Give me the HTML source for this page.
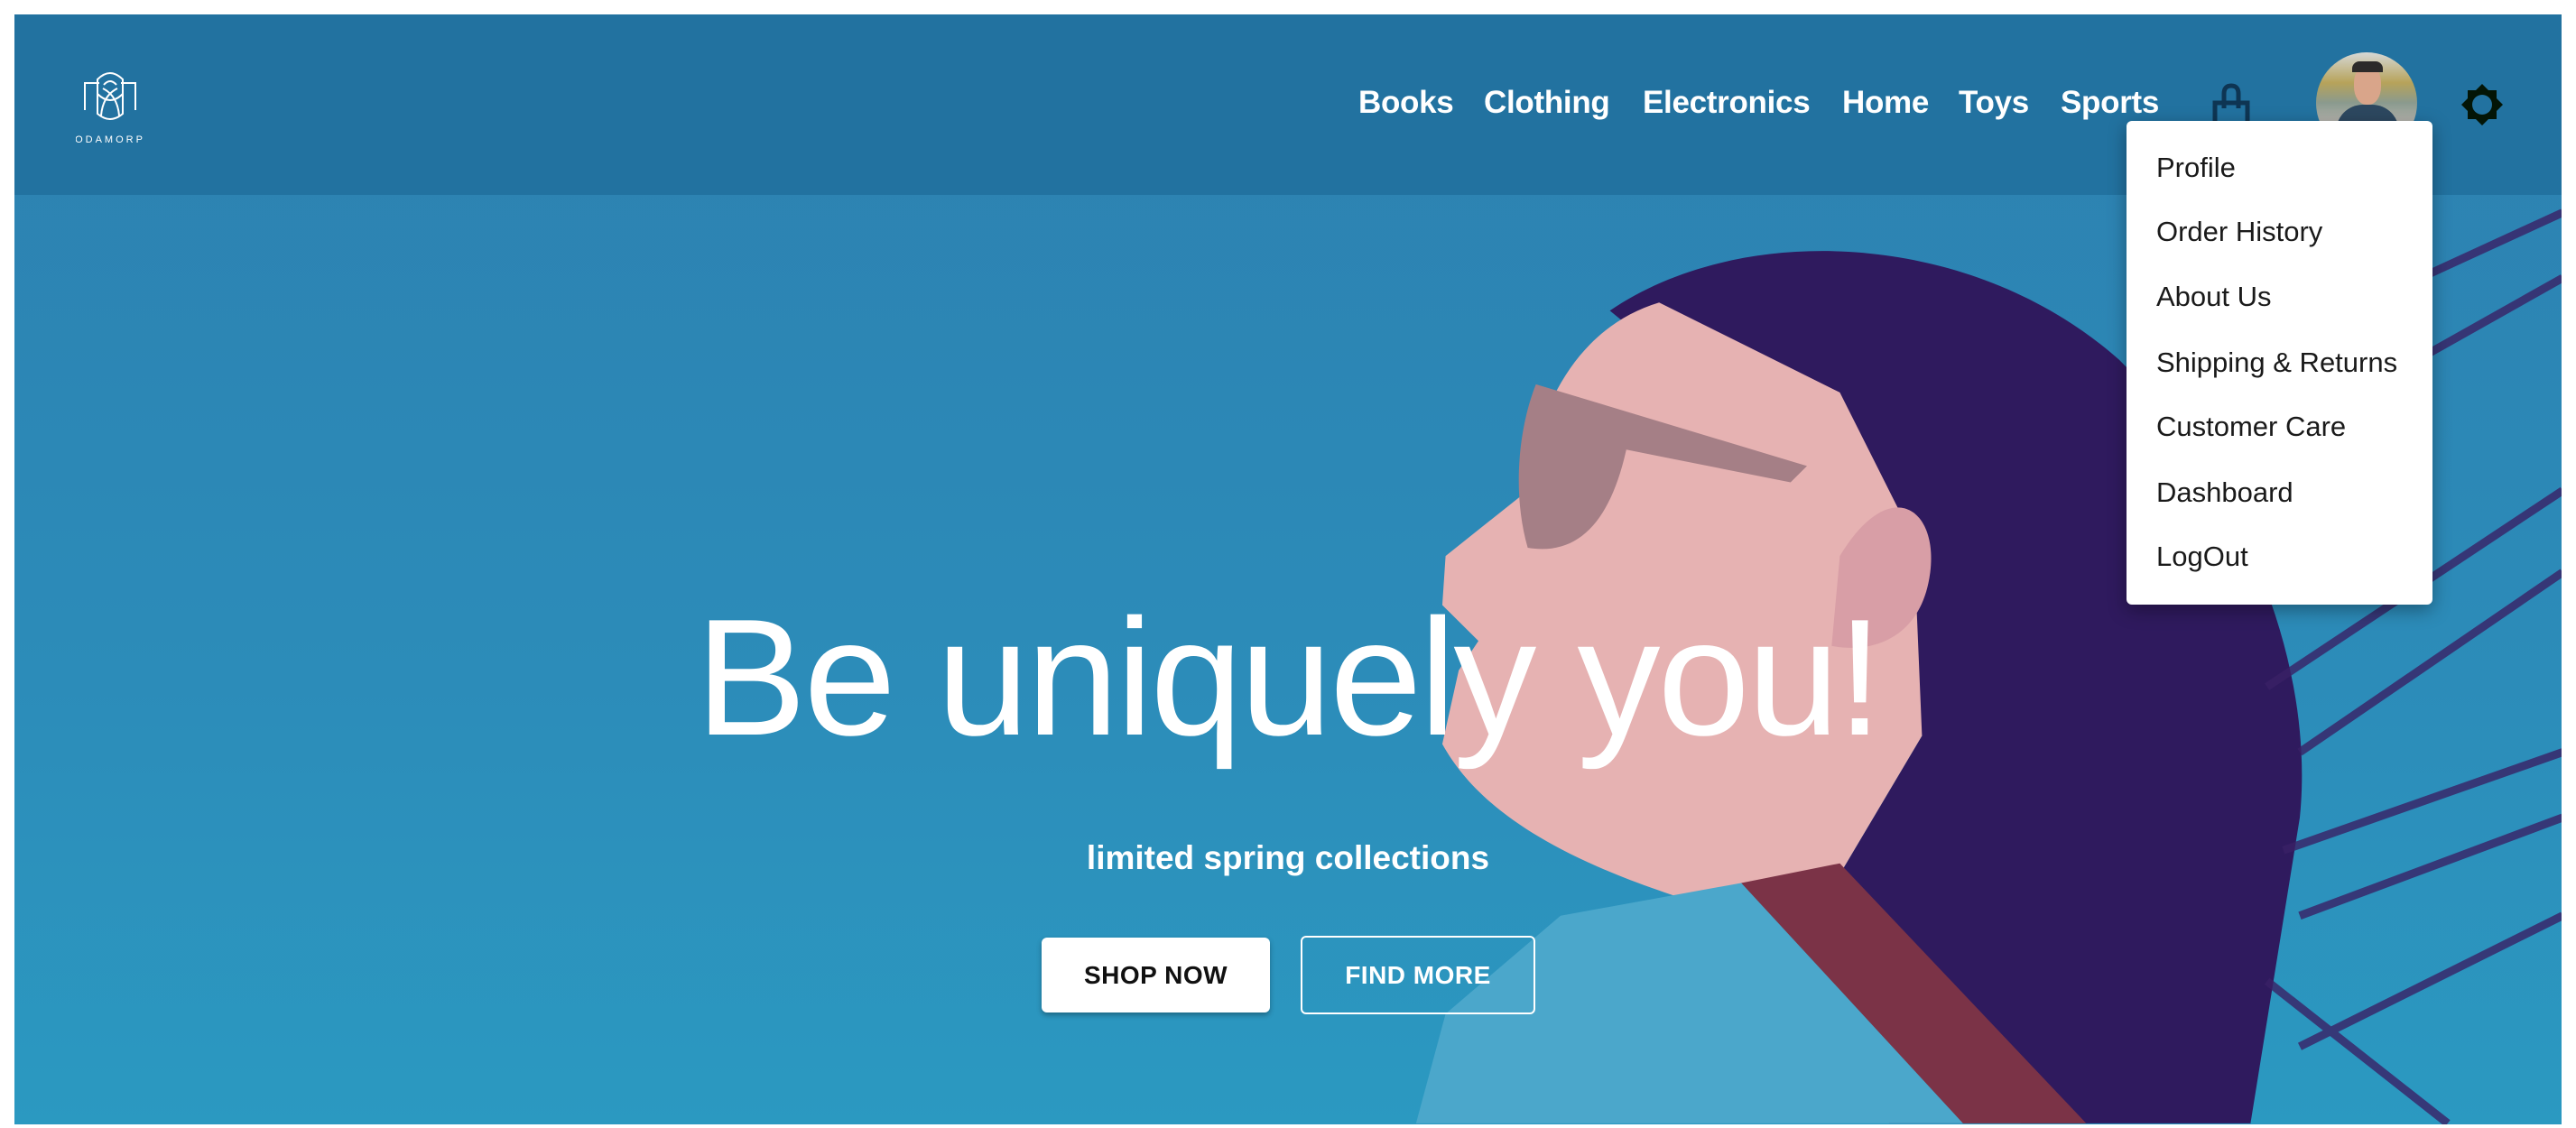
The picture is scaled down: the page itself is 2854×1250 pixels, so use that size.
<!DOCTYPE html>
<html><head><meta charset="utf-8"><style>
*{margin:0;padding:0;box-sizing:border-box}
body{width:2854px;height:1250px;background:#fff;position:relative;overflow:hidden;font-family:"Liberation Sans",sans-serif}
#hero{position:absolute;left:16px;top:16px;width:2822px;height:1230px;background:linear-gradient(180deg,#2d80b0 0%,#2c8cb9 60%,#2b99c1 100%);overflow:hidden}
#hdr{position:absolute;left:16px;top:16px;width:2822px;height:200px;background:#2272a0}
.nav{position:absolute;top:114px;transform:translateY(-50%);color:#fff;font-weight:bold;font-size:35px;letter-spacing:-0.3px}
#dd{position:absolute;left:2356px;top:134px;width:339px;height:536px;background:#fff;border-radius:6px;box-shadow:0 6px 20px rgba(0,0,0,.35)}
#dd div{position:absolute;left:33px;font-size:31px;color:#1a1a1a;transform:translateY(-50%)}
h1{position:absolute;left:0;width:2854px;text-align:center;top:645px;color:#fff;font-weight:normal;font-size:184px;letter-spacing:-3px;line-height:210px}
.sub{position:absolute;left:0;width:2854px;text-align:center;top:930px;color:#fff;font-weight:bold;font-size:37px}
.btn{position:absolute;top:1039px;height:83px;border-radius:6px;font-size:28px;font-weight:bold;letter-spacing:0.5px;display:flex;align-items:center;justify-content:center}
</style></head><body>
<div id="hero">
<svg width="2822" height="1230" viewBox="16 16 2822 1230" style="position:absolute;left:0;top:0">
<g transform="scale(1.82,1.812)">
<path d="M980,190 C1060,135 1200,140 1290,220 C1360,290 1410,400 1400,500 L1370,687 L1150,687 L1105,560 L1170,450 L1150,330 Z" fill="#2f1a5e"/>
<g stroke="#3a2065" stroke-width="5" opacity=".8" fill="none">
<path d="M1300,250 L1560,130 M1330,300 L1560,170 M1380,420 L1560,300 M1400,460 L1560,350 M1390,520 L1560,460 M1400,560 L1560,500 M1380,600 L1490,687 M1400,640 L1560,560"/>
</g>
<path d="M1010,185 C960,200 935,250 930,300 L880,340 L878,370 L900,392 L888,410 L878,455 C900,495 950,530 1060,560 L1105,560 L1170,450 L1165,330 L1120,240 Z" fill="#e6b2b2"/>
<path d="M1120,340 C1150,290 1180,310 1175,350 C1170,390 1140,400 1115,395 Z" fill="#d89ea6"/>
<path d="M935,235 L1100,285 L1090,295 L990,275 C980,320 960,340 930,335 C920,300 925,260 935,235 Z" fill="#a57f86"/>
<path d="M862,687 L880,620 L950,560 L1060,540 L1150,570 L1230,687 Z" fill="#4ba7cb"/>
<path d="M1060,540 L1120,528 L1270,687 L1195,687 Z" fill="#7b3347"/>
</g>
</svg>
</div>
<div id="hdr"></div>
<svg style="position:absolute;left:84px;top:74px" width="76" height="86" viewBox="0 0 76 86">
<g fill="none" stroke="#fff" stroke-width="2">
<path d="M24,52 L24,14 Q38,0 52,14 L52,52 Q38,64 24,52 Z"/>
<path d="M31,20 Q38,12 45,20"/>
<path d="M10,48 L10,18 L26,18 M66,48 L66,18 L50,18"/>
<path d="M24,30 Q38,44 52,30 M28,54 Q30,32 46,24 M48,54 Q46,32 30,24"/>
</g>
<text x="38" y="84" fill="#fff" font-size="11" text-anchor="middle" letter-spacing="3" font-family="Liberation Sans">ODAMORP</text>
</svg>
<div class="nav" style="left:1505px">Books</div>
<div class="nav" style="left:1644px">Clothing</div>
<div class="nav" style="left:1820px">Electronics</div>
<div class="nav" style="left:2041px">Home</div>
<div class="nav" style="left:2170px">Toys</div>
<div class="nav" style="left:2283px">Sports</div>
<svg style="position:absolute;left:2450px;top:90px" width="44" height="52" viewBox="0 0 44 52"><g fill="none" stroke="#0e3553" stroke-width="5"><path d="M4,54 L4,24 L40,24 L40,54"/><path d="M14,30 L14,14 Q14,5 22,5 Q30,5 30,14 L30,30"/></g></svg>
<div style="position:absolute;left:2566px;top:58px;width:112px;height:112px;border-radius:50%;overflow:hidden;background:linear-gradient(180deg,#d6d8d6 0%,#b7a35a 30%,#8a9a8e 50%,#b9b6b0 70%,#a7a39e 100%)">
<div style="position:absolute;left:42px;top:14px;width:30px;height:44px;border-radius:45%;background:#d9a58a"></div>
<div style="position:absolute;left:40px;top:10px;width:34px;height:12px;border-radius:8px 8px 0 0;background:#2c2a2a"></div>
<div style="position:absolute;left:22px;top:58px;width:70px;height:60px;border-radius:30px 30px 0 0;background:#2d4860"></div>
</div>
<svg style="position:absolute;left:2727px;top:93px" width="46" height="46" viewBox="0 0 46 46"><path d="M23,0 L30,7 L39,7 L39,16 L46,23 L39,30 L39,39 L30,39 L23,46 L16,39 L7,39 L7,30 L0,23 L7,16 L7,7 L16,7 Z" fill="#031506"/><circle cx="23" cy="23" r="11" fill="#2272a0"/></svg>
<div id="dd">
<div style="top:52px">Profile</div>
<div style="top:123px">Order History</div>
<div style="top:195px">About Us</div>
<div style="top:268px">Shipping &amp; Returns</div>
<div style="top:339px">Customer Care</div>
<div style="top:412px">Dashboard</div>
<div style="top:483px">LogOut</div>
</div>
<h1>Be uniquely you!</h1>
<div class="sub">limited spring collections</div>
<div class="btn" style="left:1154px;width:253px;background:#fff;color:#111;box-shadow:0 3px 6px rgba(0,0,0,.3)">SHOP NOW</div>
<div class="btn" style="left:1441px;width:260px;border:2px solid #fff;color:#fff;top:1037px;height:87px">FIND MORE</div>
</body></html>
